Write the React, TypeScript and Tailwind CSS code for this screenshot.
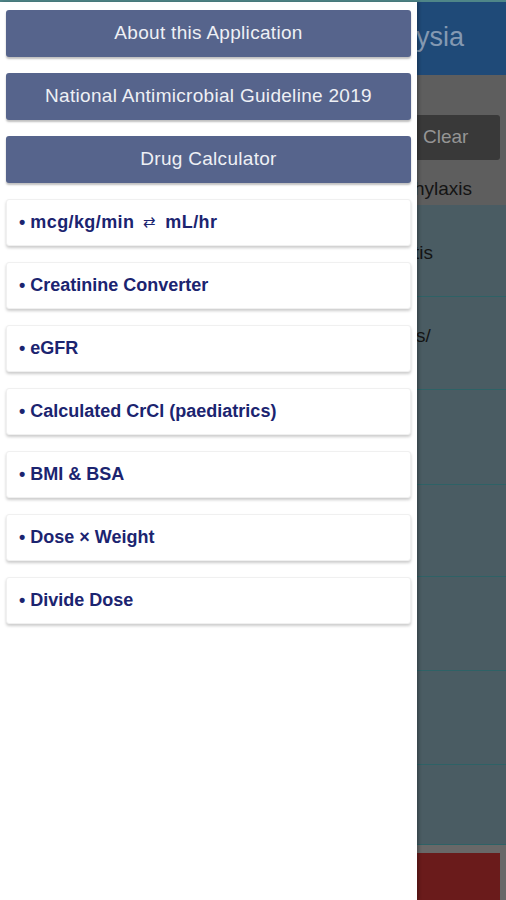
const menuButtons = ["About this Application", "National Antimicrobial Guideline 2019", "Drug Calculator"];

const calculators = [
  "mcg/kg/min",
  "Creatinine Converter",
  "eGFR",
  "Calculated CrCl (paediatrics)",
  "BMI & BSA",
  "Dose \u00D7 Weight",
  "Divide Dose",
];

function Drawer() {
  return (
    <aside className="relative z-10 flex w-[417px] shrink-0 flex-col gap-4 bg-white px-[6px] pt-[8px] shadow-[2px_0_3px_rgba(0,0,0,0.25)]">
      {menuButtons.map((label) => (
        <button
          key={label}
          className="flex h-[47px] w-full items-center justify-center rounded-[3px] bg-[#56648c] text-[19px] tracking-[0.3px] text-[#eef0f5] shadow-[0_2px_2px_rgba(0,0,0,0.25)]"
        >
          {label}
        </button>
      ))}
      {calculators.map((label, i) => (
        <div
          key={label}
          className="flex h-[47px] w-full items-center rounded-[3px] border border-[#f0f0f0] bg-white pl-[12px] text-[18px] font-bold text-[#1b2470] shadow-[0_2px_3px_rgba(0,0,0,0.2)]"
        >
          <span className="mr-[5px]">•</span>
          <span className={i === 0 ? "tracking-[0.4px]" : ""}>{label}</span>
          {i === 0 && (
            <>
              <span className="mx-[9px] text-[15px] font-normal">⇄</span>
              <span className="tracking-[0.4px]">mL/hr</span>
            </>
          )}
        </div>
      ))}
    </aside>
  );
}

function Backdrop() {
  const rows = [92, 93, 95, 92, 94, 94, 80];
  return (
    <div className="flex min-w-0 flex-1 flex-col overflow-hidden bg-[#4a5c63]">
      <div className="flex h-[73px] items-center bg-[#1f4a78] pb-[2px] text-[27px] text-[#8499b2]">
        <span className="ml-[-1px] whitespace-nowrap">ysia</span>
      </div>
      <div className="flex h-[130px] flex-col bg-[#5e5e5e]">
        <div className="mt-[40px] mr-[6px] flex h-[45px] items-center rounded-r-[3px] bg-[#393939] pl-[6px] text-[19px] text-[#959595]">
          Clear
        </div>
        <div className="mt-[15px] ml-[-3px] whitespace-nowrap text-[19px] text-[#141414]">hylaxis</div>
      </div>
      {rows.map((h, i) => (
        <div
          key={i}
          style={{ height: h }}
          className="border-b border-[#2e6266] text-[19px] text-[#141414]"
        >
          {i === 0 && <div className="mt-[34px] ml-[-3px] whitespace-nowrap">tis</div>}
          {i === 1 && <div className="mt-[25px] ml-[-1px] whitespace-nowrap">s/</div>}
        </div>
      ))}
      <div className="flex flex-1 bg-[#686868] pt-[8px] pr-[6px]">
        <div className="flex-1 bg-[#6a1b1b]" />
      </div>
    </div>
  );
}

export default function App() {
  return (
    <div className="flex h-[900px] w-full flex-col overflow-hidden bg-white font-['Liberation_Sans',Arial,sans-serif]">
      <div className="h-[2px] w-full shrink-0 bg-[#4f8688]" />
      <div className="flex min-h-0 flex-1">
        <Drawer />
        <Backdrop />
      </div>
    </div>
  );
}
